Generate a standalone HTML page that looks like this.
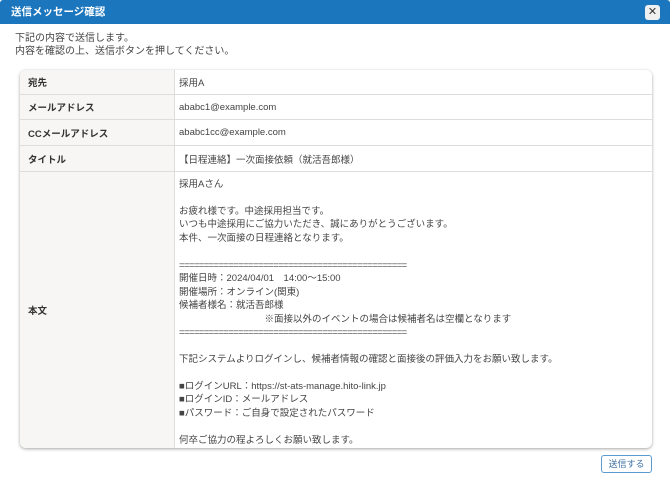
<!DOCTYPE html>
<html><head><meta charset="utf-8"><style>
*{margin:0;padding:0;box-sizing:border-box}
body{width:670px;height:483px;background:#fff;font-family:"Liberation Sans","Noto Sans CJK JP",sans-serif;color:#333;font-size:10px;position:relative;overflow:hidden}
.hd{position:absolute;left:0;top:0;width:670px;height:24px;background:#1b76bd;border-radius:3px 3px 0 0;color:#fff;font-weight:bold;font-size:10.5px;line-height:24px;padding-left:11px}
.x{position:absolute;right:10px;top:5px;width:15px;height:15px;background:#f0f0f0;border-radius:3px;color:#333;font-size:11px;line-height:15px;text-align:center;font-weight:normal}
.intro{position:absolute;left:15px;top:32px;line-height:13px;font-size:10px;color:#444}
.tb{position:absolute;left:20px;top:70px;width:632px;height:378px;border-radius:6px;box-shadow:0 1px 3px rgba(0,0,0,.35);overflow:hidden;background:#fff}
.r{display:flex;border-bottom:1px solid #ddd}
.l{width:155px;background:#f7f6f4;border-right:1px solid #ddd;font-weight:bold;padding-left:8px;display:flex;align-items:center;font-size:9.5px}
.v{flex:1;padding-left:4px;display:flex;align-items:center;font-size:9.5px;color:#444}
.body .v{display:block;padding-top:6px;line-height:13.45px;white-space:pre}
.eq{letter-spacing:-0.6px}
.btn{position:absolute;left:601px;top:455px;width:51px;height:18px;border:1px solid #5b9bd0;border-radius:3px;color:#3c6fa3;font-size:9px;text-align:center;line-height:16px}
</style></head><body>
<div class="hd">送信メッセージ確認<div class="x">✕</div></div>
<div class="intro">下記の内容で送信します。<br>内容を確認の上、送信ボタンを押してください。</div>
<div class="tb">
<div class="r" style="height:25px"><div class="l">宛先</div><div class="v">採用A</div></div>
<div class="r" style="height:25px"><div class="l">メールアドレス</div><div class="v">ababc1@example.com</div></div>
<div class="r" style="height:26px"><div class="l">CCメールアドレス</div><div class="v">ababc1cc@example.com</div></div>
<div class="r" style="height:26px"><div class="l">タイトル</div><div class="v">【日程連絡】一次面接依頼（就活吾郎様）</div></div>
<div class="r body" style="height:276px;border-bottom:none"><div class="l">本文</div><div class="v">採用Aさん

お疲れ様です。中途採用担当です。
いつも中途採用にご協力いただき、誠にありがとうございます。
本件、一次面接の日程連絡となります。

<span class="eq">==============================================</span>
開催日時：2024/04/01　14:00～15:00
開催場所：オンライン(関東)
候補者様名：就活吾郎様
　　　　　　　　　※面接以外のイベントの場合は候補者名は空欄となります
<span class="eq">==============================================</span>

下記システムよりログインし、候補者情報の確認と面接後の評価入力をお願い致します。

■ログインURL：https://st-ats-manage.hito-link.jp
■ログインID：メールアドレス
■パスワード：ご自身で設定されたパスワード

何卒ご協力の程よろしくお願い致します。</div></div>
</div>
<div class="btn">送信する</div>
</body></html>
